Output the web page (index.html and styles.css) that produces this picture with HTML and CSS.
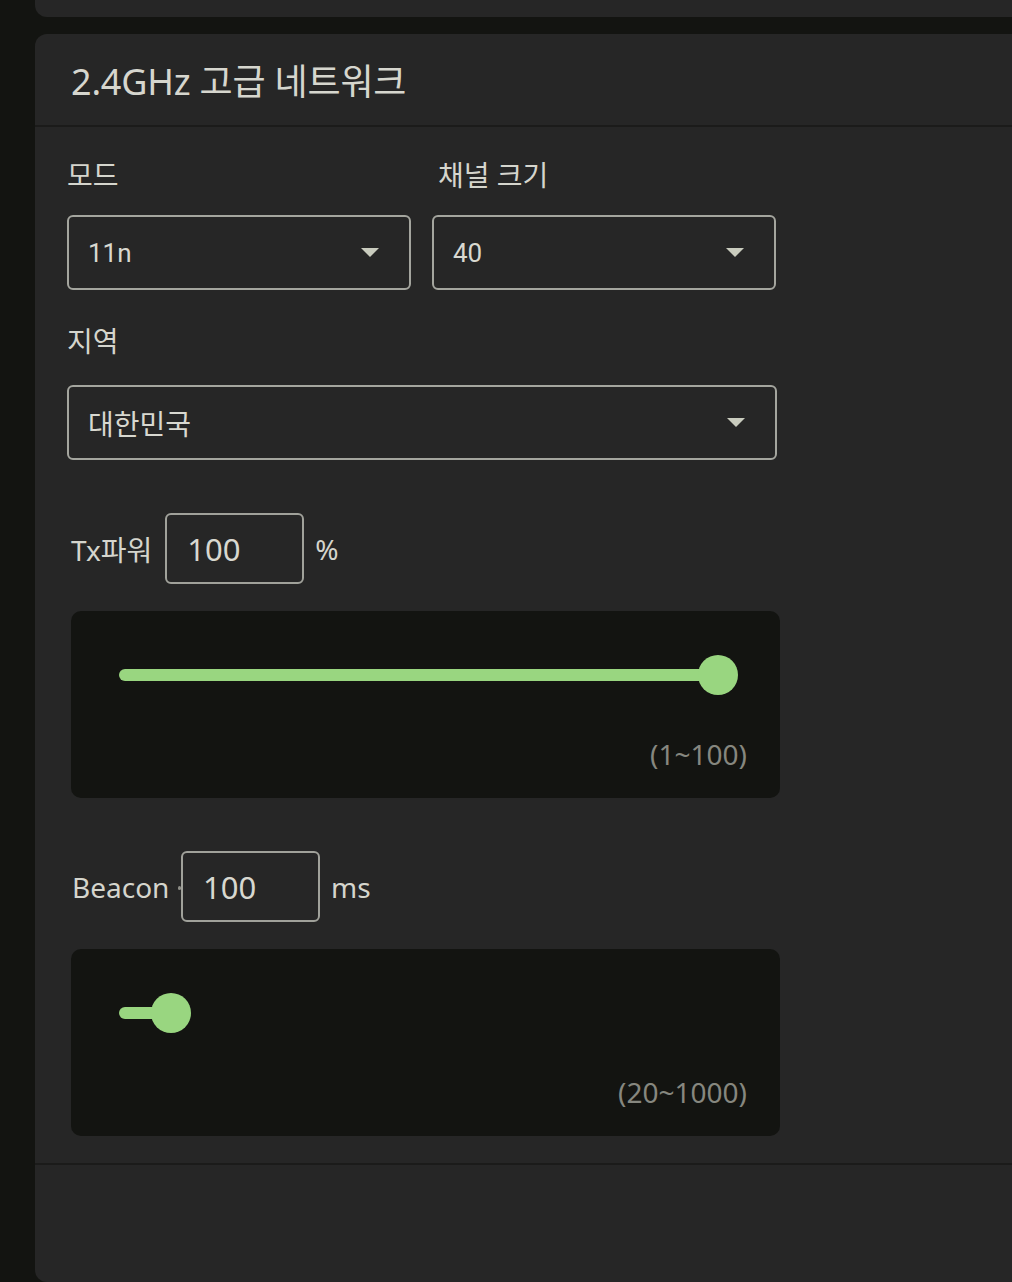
FILE: index.html
```html
<!DOCTYPE html>
<html>
<head>
    <title>2.4GHz 고급 네트워크</title>
    <link rel="stylesheet" href="styles.css">
</head>
<body>

<div class="page">
    <div class="card card-prev"></div>

    <section class="card">
        <header class="card-head">
            <h2>2.4GHz 고급 네트워크</h2>
        </header>

        <div class="card-body">
            <div class="field-row">
                <div class="field">
                    <label class="field-label">모드</label>
                    <div class="select"><span>11n</span><i class="caret"></i></div>
                </div>
                <div class="field">
                    <label class="field-label field-label-shift">채널 크기</label>
                    <div class="select"><span>40</span><i class="caret"></i></div>
                </div>
            </div>

            <div class="field field-region">
                <label class="field-label">지역</label>
                <div class="select select-wide"><span class="kr">대한민국</span><i class="caret"></i></div>
            </div>

            <div class="value-row">
                <span class="value-label tx-label">Tx파워</span>
                <input class="value-input" type="text" value="100">
                <span class="unit">%</span>
            </div>
            <div class="slider-box">
                <div class="track">
                    <div class="fill" style="width: 100%"><span class="thumb"></span></div>
                </div>
                <div class="range-hint">(1~100)</div>
            </div>

            <div class="value-row">
                <span class="value-label beacon-label">Beacon</span>
                <input class="value-input" type="text" value="100">
                <span class="unit">ms</span>
            </div>
            <div class="slider-box">
                <div class="track">
                    <div class="fill" style="width: 8.6%"><span class="thumb"></span></div>
                </div>
                <div class="range-hint">(20~1000)</div>
            </div>
        </div>

        <div class="card-foot"></div>
    </section>
</div>

</body>
</html>
```

FILE: styles.css
```css
body {
    margin: 0;
    height: 1282px;
    overflow: hidden;
    background: #131411;
    color: #d5d5cd;
    font-family: "Noto Sans", "Noto Sans CJK KR", sans-serif;
}
.page {
    padding-left: 35px;
}
.card {
    width: 977px;
    background: #262626;
    border-radius: 12px 0 0 12px;
}
.card-prev {
    height: 17px;
    border-radius: 0 0 0 12px;
}
.card-prev + .card {
    margin-top: 17px;
    height: 1248px;
    display: flex;
    flex-direction: column;
}
.card-head {
    height: 91px;
    display: flex;
    align-items: center;
    padding-left: 36px;
    border-bottom: 2px solid #1b1b1a;
}
.card-head h2 {
    margin: 0;
    font-size: 36px;
    font-weight: 400;
    color: #d6d6ce;
    letter-spacing: -0.2px;
}
.card-body {
    padding: 30px 0 27px 32px;
    border-bottom: 2px solid #1b1b1a;
}
.field-row {
    display: flex;
    gap: 21px;
}
.field-label {
    display: block;
    font-size: 28px;
    line-height: 36px;
    margin-bottom: 22px;
}
.field-label-shift {
    padding-left: 6px;
}
.field-region {
    margin-top: 33px;
}
.field-region .field-label {
    margin-bottom: 26px;
}
.select {
    box-sizing: border-box;
    width: 345px;
    height: 75px;
    border: 2px solid #a4a59e;
    border-radius: 6px;
    display: flex;
    align-items: center;
    justify-content: space-between;
    padding: 0 30px 0 19px;
    font-family: Roboto, "Noto Sans CJK KR", sans-serif;
    font-size: 26px;
    color: #d8d8d0;
}
.field-row .select {
    width: 344px;
}
.select .kr {
    font-family: "Noto Sans CJK KR", sans-serif;
    font-size: 28px;
}
.select-wide {
    width: 710px;
}
.caret {
    width: 0;
    height: 0;
    border-left: 9px solid transparent;
    border-right: 9px solid transparent;
    border-top: 9px solid #c9ccbe;
}
.value-row {
    display: flex;
    align-items: center;
    margin-top: 53px;
    padding-left: 4px;
}
.value-label {
    font-size: 28px;
    white-space: nowrap;
}
.tx-label {
    margin-right: 13px;
}
.beacon-label {
    display: flex;
    align-items: center;
    justify-content: space-between;
    box-sizing: border-box;
    padding-left: 1px;
    width: 110px;
}
.beacon-label::after {
    content: "";
    width: 3px;
    height: 4px;
    border-radius: 2px;
    background: #8d8d86;
    margin-top: 2px;
}
.value-input {
    box-sizing: border-box;
    width: 139px;
    height: 71px;
    border: 2px solid #a0a19a;
    border-radius: 6px;
    background: #262626;
    color: #d8d8d0;
    font-family: "Noto Sans", sans-serif;
    font-size: 31px;
    padding: 0 0 0 20px;
    outline: none;
}
.unit {
    margin-left: 11px;
    font-size: 28px;
}
.slider-box {
    box-sizing: border-box;
    width: 709px;
    height: 187px;
    margin: 27px 0 0 4px;
    padding: 58px 33px 0 48px;
    background: #131411;
    border-radius: 10px;
}
.track {
    width: 599px;
    height: 12px;
}
.fill {
    position: relative;
    height: 100%;
    background: #99d680;
    border-radius: 6px;
}
.thumb {
    position: absolute;
    right: -20px;
    top: -14px;
    width: 40px;
    height: 40px;
    border-radius: 50%;
    background: #99d680;
}
.range-hint {
    margin-top: 55px;
    text-align: right;
    font-size: 28px;
    line-height: 36px;
    color: #86877f;
}
.card-foot {
    flex: 1;
}
```
